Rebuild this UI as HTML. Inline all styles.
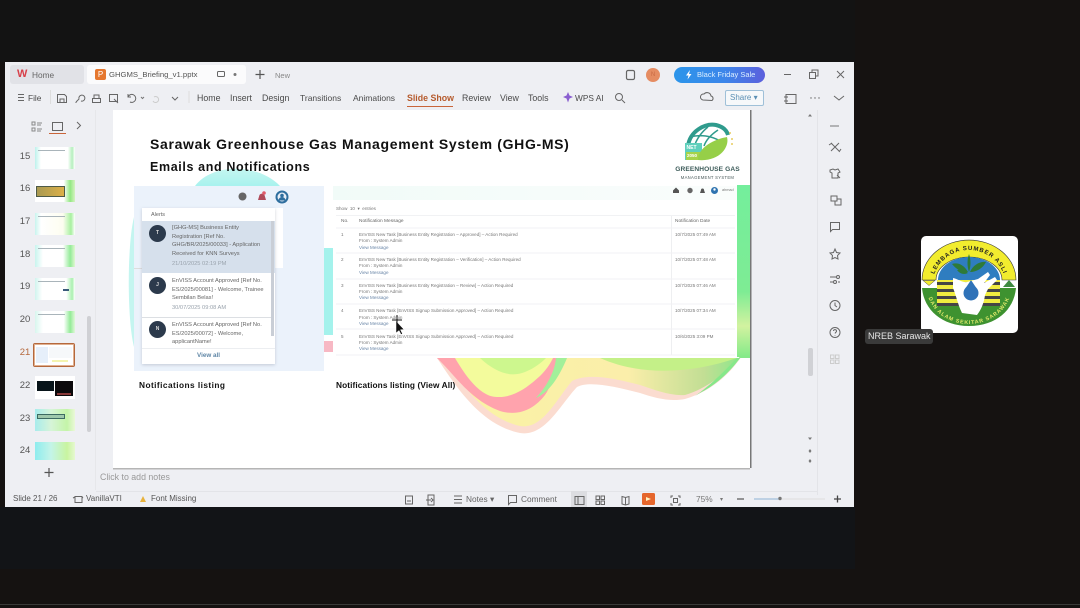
<!DOCTYPE html>
<html><head><meta charset="utf-8"><style>
html,body{margin:0;padding:0;width:1080px;height:608px;overflow:hidden;background:#151211}
body{position:relative;font-family:"Liberation Sans",sans-serif;color:#444;filter:blur(.3px)}
div,span{position:absolute;white-space:nowrap}
svg{position:absolute;overflow:visible}
.m{font-size:8.800px;top:93px;color:#4a4a4a}
.n{font-size:9.500px;color:#555;left:19px;width:12px;text-align:center}
.r{font-size:4.550px;color:#777;left:359px}
.rl{font-size:4.550px;color:#6a86a8;left:359px}
.a{font-size:5.700px;color:#666;left:172px;line-height:8.500px}
.av{width:17px;height:17px;border-radius:50%;background:#2c3a4c;color:#ddd;font-size:5px;text-align:center;line-height:17px;left:149px;font-weight:bold}
.i{fill:none;stroke:#666;stroke-width:1}
.tl{left:38px;width:27px;height:1px;background:#a9b4ba}
</style></head><body>
<div style="left:0;top:0;width:855px;height:62px;background:#131313"></div>
<div style="left:0;top:507px;width:855px;height:62px;background:#121417"></div>
<div style="left:0;top:604px;width:1080px;height:1px;background:#3a3a38"></div>

<div style="left:5px;top:62px;width:849px;height:445px;background:#eeeff3"></div>
<!-- tabs -->
<div style="left:10px;top:65px;width:74px;height:19px;background:#e1e2e7;border-radius:3px"></div>
<div style="left:87px;top:65px;width:159px;height:19px;background:#fbfbfc;border-radius:3px"></div>
<div style="left:17px;top:68px;font-size:11px;font-weight:bold;color:#d8404a">W</div>
<div style="left:32px;top:70px;font-size:8.300px;color:#666">Home</div>
<div style="left:95px;top:69px;width:11px;height:11px;background:#e5772f;border-radius:2px;color:#fff;font-size:8px;text-align:center;line-height:11px">P</div>
<div style="left:109px;top:70px;font-size:7.700px;color:#555">GHGMS_Briefing_v1.pptx</div>
<svg style="left:0;top:0" width="1080" height="608">
<rect class="i" x="217.500" y="71.500" width="7" height="5" rx="1"/>
<circle cx="235" cy="74.500" r="1.500" fill="#777"/>
<path d="M260 70v9M255.500 74.500h9" stroke="#555" stroke-width="1.200" fill="none"/>
<rect x="626.500" y="70.500" width="8" height="9" rx="1.500" fill="none" stroke="#666" stroke-width="1.200"/>
<path d="M784 74.500h7" stroke="#666" fill="none"/>
<rect class="i" x="809.500" y="72.500" width="6" height="6"/><path class="i" d="M812 72v-2h6v6h-2"/>
<path class="i" d="M837 71l7 7M844 71l-7 7"/>
<!-- toolbar icons -->
<path class="i" d="M18 94.500h6M18 97.500h6M18 100.500h6"/>
<path class="i" d="M57.500 94.500h7l2 2v6h-9zM60 102v-3h4v3"/>
<path class="i" d="M76 102l3-3a3 3 0 1 1 2 2M76 102v1"/>
<path class="i" d="M92.500 98.500h8v4h-8zM94 98v-3h5v3"/>
<path class="i" d="M109.500 94.500h8v7h-8zM114 99l4 4"/>
<path class="i" d="M128 97a4 4 0 1 1 2 5M128 94v3h3"/>
<path d="M141 97l1.500 1.500 1.500-1.500" stroke="#777" fill="none"/>
<path d="M154 97a3 3 0 1 1-1 4" stroke="#ccc" fill="none"/>
<path d="M172 97l3 3 3-3" class="i"/>
<path d="M189 91v12" stroke="#ddd"/>
<path d="M568 92l1.500 3.500 3.500 1.500-3.500 1.500-1.500 4-1.500-4-3.500-1.500 3.500-1.500z" fill="#8a5fd0"/>
<circle class="i" cx="619" cy="97" r="3.500"/><path class="i" d="M622 100l3 3"/>
<path class="i" d="M703 100a3 3 0 0 1 1-6 4 4 0 0 1 7 2 2.500 2.500 0 0 1 1 4.500z"/>
<path class="i" d="M786 94.500h10v9h-10zM784 97h4M784 101h4"/>
<circle cx="811" cy="98" r=".7" fill="#666"/><circle cx="815" cy="98" r=".7" fill="#666"/><circle cx="819" cy="98" r=".7" fill="#666"/>
<path class="i" d="M834 96l5 4 5-4"/>
<!-- left panel icons -->
<path class="i" d="M32 122h3v3h-3zM32 128h3v3h-3zM37 123h5M37 125h4M37 129h5M37 131h4" style="stroke:#888"/>
<rect x="52.500" y="122.500" width="10" height="8" fill="none" stroke="#666"/>
<path d="M49 133.500h17" stroke="#c9653a" stroke-width="1"/>
<path class="i" d="M77 122l3.500 3.500-3.500 3.500"/>
<!-- right sidebar icons -->
<path d="M830 126h9" stroke="#777"/>
<path class="i" d="M831 143l8 8M839 143l-8 8M829 145l3-2M841 149l-2 3"/>
<path class="i" d="M830 170l3-1 2 1 3-1 2 3-2 1v5h-6v-5l-2-1zM837 175l3 3"/>
<path class="i" d="M831 196h6v5h-6zM835 201v4h6v-6h-4"/>
<path class="i" d="M830.500 222.500h9v7h-7l-2 2z"/>
<path class="i" d="M835 249l1.500 3.500 3.500.5-2.500 2.500.5 3.500-3-1.500-3 1.500.5-3.500-2.500-2.500 3.500-.5z"/>
<path class="i" d="M830 277h6M830 282h3M838 282h2"/><circle class="i" cx="838" cy="277" r="1.500"/><circle class="i" cx="835" cy="282" r="1.500"/>
<circle class="i" cx="835" cy="305.500" r="5"/><path class="i" d="M835 302.500v3l2 1.500"/>
<circle class="i" cx="835" cy="332.500" r="5"/><path class="i" d="M833.500 331a1.500 1.500 0 1 1 2 1.500l-.5 1M835 335v.5"/>
<path d="M830.500 355h3.500v3.500h-3.500zM835.500 355h3.500v3.500h-3.500zM830.500 360h3.500v3.500h-3.500zM835.500 360h3.500v3.500h-3.500z" stroke="#ccc" fill="none"/>
<path d="M810 114l2 2.500h-4zM810 440l2-2.500h-4z" fill="#777"/>
<path d="M810 449l1.500 2h-3zM810 453l1.500-2h-3zM810 459l1.500 2h-3zM810 463l1.500-2h-3z" fill="#777"/>
<!-- status icons -->
<path class="i" d="M75 496.500h7v6h-7zM73 498l2-1M83 498l-1-1"/>
<path d="M140 502l3-6 3 6z" fill="#e8b23c"/>
<path class="i" d="M405.500 496h7v8h-7zM407 501h4"/>
<path class="i" d="M428 495h6v10h-6zM426 500h5M431 498l2 2-2 2"/>
<path class="i" d="M454 496h8M454 499.500h8M454 503h8"/>
<path class="i" d="M508.500 495.500h8v7h-6l-2 2z"/>
<path class="i" d="M596 496h3.500v3.500h-3.500zM601 496h3.500v3.500h-3.500zM596 501h3.500v3.500h-3.500zM601 501h3.500v3.500h-3.500z"/>
<path class="i" d="M622 496.500l3.500 1 3.500-1v7.500l-3.500 1-3.500-1zM625.500 497.500v7"/>
<path class="i" d="M671 498v-2h2M678 496h2v2M680 503v2h-2M673 505h-2v-2"/><rect class="i" x="673.500" y="498.500" width="4" height="4"/>
<path d="M737 499h7" stroke="#555" stroke-width="1.200"/>
<path d="M754 499h25" stroke="#8fb3d4"/><path d="M779 499h46" stroke="#ddd"/><circle cx="780" cy="498.500" r="1.700" fill="#777"/>
<path d="M834 499h7M837.500 495.500v7" stroke="#444" stroke-width="1.300"/>
<path d="M49 468v9M44.500 472.500h9" stroke="#555" stroke-width="1.200"/>
</svg>
<div style="left:275px;top:71px;font-size:7.500px;color:#888">New</div>
<div style="left:646px;top:68px;width:14px;height:14px;border-radius:50%;background:#e58c62;color:#c96a44;font-size:6px;text-align:center;line-height:14px">N</div>
<div style="left:674px;top:67px;width:91px;height:16px;border-radius:8px;background:linear-gradient(90deg,#2b95ea,#3c86ea 55%,#5c5fdc);color:#dcefff;font-size:7.500px;line-height:16px;text-indent:23px">Black Friday Sale</div>
<svg style="left:0;top:0" width="1080" height="608"><path d="M690 70l-4 5.500h2.500l-1 4 4-5.500h-2.500z" fill="#fff"/></svg>

<div class="m" style="left:28px;top:93px;font-size:8.300px">File</div>
<div style="left:50px;top:90px;width:1px;height:14px;background:#ddd"></div>
<div class="m" style="left:197px">Home</div>
<div class="m" style="left:230px">Insert</div>
<div class="m" style="left:262px">Design</div>
<div class="m" style="left:300px;font-size:8.500px">Transitions</div>
<div class="m" style="left:353px;font-size:8.500px">Animations</div>
<div class="m" style="left:407px;color:#b55a2c;font-weight:bold;font-size:8.800px">Slide Show</div>
<div style="left:407px;top:106px;width:46px;height:1px;background:#c9653a"></div>
<div class="m" style="left:462px">Review</div>
<div class="m" style="left:500px">View</div>
<div class="m" style="left:528px">Tools</div>
<div class="m" style="left:575px;font-size:8.300px">WPS AI</div>
<div style="left:725px;top:90px;width:37px;height:14px;border:1px solid #9fc0d8;border-radius:2px;background:#f6f8fa;color:#5a8fb4;font-size:8px;line-height:14px;text-indent:4px">Share ▾</div>

<!-- sidebar -->
<div style="left:95px;top:110px;width:1px;height:380px;background:#e6e7ea"></div>
<div style="left:817px;top:110px;width:1px;height:385px;background:#e3e4e8"></div>
<div style="left:87px;top:316px;width:4px;height:116px;background:#cfd0d4;border-radius:2px"></div>
<div style="left:808px;top:348px;width:5px;height:28px;background:#d0d1d5;border-radius:2px"></div>

<div class="n" style="top:151px">15</div><div class="n" style="top:183px">16</div><div class="n" style="top:216px">17</div><div class="n" style="top:249px">18</div><div class="n" style="top:281px">19</div><div class="n" style="top:314px">20</div><div class="n" style="top:347px;color:#b5683c">21</div><div class="n" style="top:380px">22</div><div class="n" style="top:413px">23</div><div class="n" style="top:445px">24</div>

<!-- thumbs -->
<div style="left:35px;top:147px;width:40px;height:22px;background:linear-gradient(90deg,#bdf2ec 0,#fff 15%,#fff 82%,#b5efbe 93%,#fff)"></div>
<div class="tl" style="top:150px"></div>
<div style="left:35px;top:180px;width:40px;height:22px;background:linear-gradient(90deg,#fff 72%,#94e884 88%,#d5f2c0)"></div>
<div style="left:36px;top:186px;width:29px;height:11px;background:linear-gradient(90deg,#a99a52,#dcb048);border:1px solid #4d5a48;box-sizing:border-box"></div>
<div style="left:35px;top:213px;width:40px;height:22px;background:linear-gradient(90deg,#c8f4ee 0,#fff 15%,#fdfdf0 70%,#a8f0a0 90%,#fff)"></div>
<div class="tl" style="top:216px"></div>
<div style="left:35px;top:245px;width:40px;height:22px;background:linear-gradient(90deg,#c8f4ee 0,#fff 20%,#fff 70%,#94eb98 88%,#dff8d0)"></div>
<div class="tl" style="top:248px"></div>
<div style="left:35px;top:278px;width:40px;height:22px;background:linear-gradient(90deg,#d0f4ee 0,#fff 18%,#fff 78%,#aaf0b0 93%,#fff)"></div>
<div class="tl" style="top:281px"></div>
<div style="left:63px;top:289px;width:6px;height:2px;background:#3a5a7a"></div>
<div style="left:35px;top:311px;width:40px;height:22px;background:linear-gradient(90deg,#d8f6ee 0,#fff 20%,#fff 72%,#94eb98 88%,#e0f8d8)"></div>
<div class="tl" style="top:314px"></div>
<div style="left:33px;top:343px;width:42px;height:24px;background:#fff;border:1px solid #b5683c;box-sizing:border-box;border-radius:2px;box-shadow:inset 0 0 0 1px #e0b090"></div>
<div style="left:36px;top:347px;width:12px;height:16px;background:#e6effa"></div>
<div style="left:49px;top:347px;width:23px;height:11px;background:#f6f8fa"></div>
<div style="left:52px;top:360px;width:16px;height:2px;background:#f3f4b0"></div>
<div style="left:35px;top:376px;width:40px;height:23px;background:#fff"></div>
<div style="left:37px;top:381px;width:17px;height:10px;background:#08141a"></div>
<div style="left:55px;top:381px;width:18px;height:15px;background:#0c0a0c"></div>
<div style="left:57px;top:393px;width:14px;height:2px;background:#883838"></div>
<div style="left:35px;top:409px;width:40px;height:22px;background:linear-gradient(90deg,#a8ecec,#d6f4d8 40%,#c4f4a8 80%,#eaf8d8)"></div>
<div style="left:37px;top:414px;width:28px;height:5px;background:#9fc8ac;border:1px solid #3d6a62;box-sizing:border-box"></div>
<div style="left:35px;top:442px;width:40px;height:18px;background:linear-gradient(90deg,#8eecee,#c4f4e8 40%,#c8f4a0 80%,#e6f8d0)"></div>

<!-- slide -->
<div style="left:113px;top:110px;width:637px;height:358px;background:#fff;box-shadow:1.500px 0 0 #777,0 1.500px 0 #b5b5b5"></div>
<svg style="left:0;top:0" width="1080" height="608">
<defs>
<linearGradient id="gs" x1="0" x2="0" y1="0" y2="1"><stop offset="0" stop-color="#74ee9c"/><stop offset=".62" stop-color="#7eec94"/><stop offset=".82" stop-color="#d2f2a0"/><stop offset="1" stop-color="#84ea88"/></linearGradient>
<linearGradient id="ga" x1="0" x2="0" y1="0" y2="1"><stop offset="0" stop-color="#c4f6f0"/><stop offset="1" stop-color="#a8f2ee"/></linearGradient>
<linearGradient id="gr" x1="0" x2="1" y1="0" y2="0"><stop offset="0" stop-color="#f9f3a4"/><stop offset=".6" stop-color="#fbeeaa"/><stop offset=".85" stop-color="#c2de94"/><stop offset="1" stop-color="#7eea88"/></linearGradient>
</defs>
<!-- outer cream/pink edge -->
<path d="M437 358C455 385 480 425 520 433C545 437 560 405 577 387C590 380 620 388 640 393C655 398 670 402 685 399C715 390 735 370 750 343V358z" fill="#fbdcd0"/>
<path d="M445 358C462 385 485 418 520 426C542 430 556 400 572 381C590 372 620 380 640 385C655 390 670 396 685 395C712 387 735 366 750 343V358z" fill="url(#gr)"/>
<!-- pink band -->
<path d="M437 358C455 375 470 400 500 411C520 417 535 408 545 395C552 385 556 368 557 358z" fill="#ffa3ad"/>
<!-- inner yellow -->
<path d="M455 358C465 375 480 397 497 397C515 398 530 385 540 376C548 368 551 362 553 358z" fill="#f3fb9c"/>
<path d="M480 358C495 372 510 378 525 372C535 368 542 362 546 358z" fill="#cdf78e"/>
<!-- green stripe -->
<path d="M556 358H567C560 375 550 392 536 398C548 385 555 370 556 358z" fill="#a2f09a"/>
<!-- right top -->
<path d="M600 358C640 376 690 374 737 358z" fill="#c4f088"/>
<path d="M700 393C725 380 740 360 750 343V358H737C730 365 715 382 695 396z" fill="#86e88a"/>
<path d="M195 186C212 163 258 163 280 186z" fill="url(#ga)"/>
<path d="M134 217C127 245 127 320 134 347z" fill="#c4f5f0"/>
<rect x="737" y="185" width="13" height="172" fill="url(#gs)"/>
<rect x="324" y="248" width="9.500" height="87" fill="#a4f2ec"/>
<rect x="324" y="341" width="9.500" height="11" fill="#f7b8c4"/>
</svg>
<div style="left:150px;top:136px;font-size:14px;font-weight:bold;color:#111;letter-spacing:.67px">Sarawak Greenhouse Gas Management System (GHG-MS)</div>
<div style="left:150px;top:160px;font-size:12.500px;font-weight:bold;color:#111;letter-spacing:.63px">Emails and Notifications</div>

<!-- logo -->
<svg style="left:0;top:0" width="1080" height="608">
<path d="M688 146C690 131 705 123 716 125C724 127 727 131 728 135" fill="none" stroke="#2f9b8d" stroke-width="4"/>
<path d="M694 148C696 138 704 130 708 127M704 146C706 140 712 134 718 130M690 137C700 134 712 136 720 141" fill="none" stroke="#2f9b8d" stroke-width="1.500"/>
<rect x="685" y="143" width="17" height="17" fill="#5fd0bc"/>
<rect x="686" y="152" width="15" height="8" fill="#a6d34a"/>
<path d="M698 160C698 147 715 139 727 137C730 148 718 162 698 160z" fill="#96cf48"/>
<circle cx="730" cy="133" r="1" fill="#e8cc60"/><circle cx="732" cy="139" r="1" fill="#e8cc60"/><circle cx="732" cy="144" r="1" fill="#e8cc60"/>
</svg>
<div style="left:686.500px;top:145px;font-size:5px;color:#fff;font-weight:bold">NET</div>
<div style="left:687px;top:153px;font-size:4.500px;color:#fff;font-weight:bold">2050</div>
<div style="left:663px;top:166px;width:90px;text-align:center;font-size:6.600px;font-weight:bold;color:#3b5a58;letter-spacing:.1px;margin-left:-.5px">GREENHOUSE GAS</div>
<div style="left:663px;top:174.500px;width:90px;text-align:center;font-size:4.200px;color:#4a5a5a;letter-spacing:.3px;margin-left:-.5px">MANAGEMENT SYSTEM</div>

<!-- left shot -->
<div style="left:134px;top:186px;width:190px;height:185px;background:#ebf2fb"></div>
<div style="left:275px;top:208px;width:8px;height:60px;background:#fff"></div>
<div style="left:134px;top:268px;width:8px;height:1px;background:#ddd"></div>
<svg style="left:0;top:0" width="1080" height="608">
<circle cx="242.500" cy="196.500" r="4" fill="#666"/>
<path d="M258 200l1.500-5a3 3 0 0 1 5 0l1.500 5z" fill="#b04a5a"/><circle cx="264" cy="193" r="1.800" fill="#e05a6a"/>
<circle cx="282" cy="197" r="6.500" fill="#2e6e9e"/><circle cx="282" cy="197" r="4.500" fill="#e8eef6"/><circle cx="282" cy="195.500" r="1.800" fill="#2e6e9e"/><path d="M278.500 200.500a3.500 3.500 0 0 1 7 0z" fill="#2e6e9e"/>
</svg>
<div style="left:142px;top:208px;width:133px;height:156px;background:#fff;box-shadow:0 1px 3px rgba(120,130,150,.35)"></div>
<div style="left:151px;top:211.500px;font-size:5.500px;color:#666">Alerts</div>
<div style="left:142px;top:221px;width:133px;height:52px;background:#d6e0ec"></div>
<div style="left:271px;top:221px;width:3px;height:115px;background:#c9ced6"></div>
<div class="av" style="top:225px">T</div>
<div class="a" style="top:224px;white-space:pre">[GHG-MS] Business Entity
Registration [Ref No.
GHG/BR/2025/00033] - Application
Received for KNN Surveys</div>
<div class="a" style="top:260px;color:#9aa3ad">21/10/2025 02:19 PM</div>
<div class="av" style="top:277px">J</div>
<div class="a" style="top:277px;white-space:pre">EnVISS Account Approved [Ref No.
ES/2025/00081] - Welcome, Trainee
Sembilan Belas!</div>
<div class="a" style="top:304px;color:#9aa3ad">30/07/2025 09:08 AM</div>
<div style="left:142px;top:317px;width:129px;height:1px;background:#dcdfe3"></div>
<div class="av" style="top:321px">N</div>
<div class="a" style="top:321px;white-space:pre">EnVISS Account Approved [Ref No.
ES/2025/00072] - Welcome,
applicantName!</div>
<div style="left:142px;top:348px;width:133px;height:1px;background:#eceef1"></div>
<div style="left:142px;top:352px;width:133px;text-align:center;font-size:6.300px;font-weight:bold;color:#5f86a6">View all</div>
<div style="left:139px;top:380px;font-size:8.300px;font-weight:bold;color:#111;letter-spacing:.45px">Notifications listing</div>

<!-- right shot -->
<div style="left:333px;top:186px;width:404px;height:171px;background:#fff"></div>
<div style="left:333px;top:186px;width:404px;height:14px;background:linear-gradient(90deg,#f1fbf8,#fafdfc)"></div>
<svg style="left:0;top:0" width="1080" height="608">
<path d="M673 190.500l3-3 3 3v2.500h-6z" fill="#555"/>
<circle cx="690" cy="190.500" r="2.700" fill="#666"/>
<path d="M700 193l1-3a1.500 1.500 0 0 1 3 0l1 3z" fill="#555"/>
<circle cx="714.500" cy="190.500" r="3.500" fill="#2f73b0"/><circle cx="714.500" cy="189.500" r="1.200" fill="#fff"/>
<path d="M671.500 215V355" stroke="#eeeff1"/>
<path d="M336 215.500H735M336 228H735M336 253H735M336 279H735M336 304H735M336 329H735M336 355H735" stroke="#f1f2f4"/>
</svg>
<div style="left:722px;top:188px;font-size:3.800px;color:#777">ahmad</div>
<div class="r" style="left:336px;top:206px">Show &nbsp;10 &nbsp;▾ &nbsp;entries</div>
<div class="r" style="left:341px;top:219px;font-size:4.800px;color:#666">No.</div>
<div class="r" style="top:219px;font-size:4.800px;color:#666">Notification Message</div>
<div class="r" style="left:675px;top:219px;font-size:4.800px;color:#666">Notification Date</div>
<div class="r" style="left:341px;top:231.500px">1</div>
<div class="r" style="top:231.500px">EnVISS New Task [Business Entity Registration – Approved] – Action Required</div>
<div class="r" style="top:237.500px">From : System Admin</div><div class="rl" style="top:244.500px">View Message</div>
<div class="r" style="left:675px;top:231.500px">10/7/2025 07:49 AM</div>
<div class="r" style="left:341px;top:257px">2</div>
<div class="r" style="top:257px">EnVISS New Task [Business Entity Registration – Verification] – Action Required</div>
<div class="r" style="top:263px">From : System Admin</div><div class="rl" style="top:269.500px">View Message</div>
<div class="r" style="left:675px;top:257px">10/7/2025 07:48 AM</div>
<div class="r" style="left:341px;top:282.500px">3</div>
<div class="r" style="top:282.500px">EnVISS New Task [Business Entity Registration – Review] – Action Required</div>
<div class="r" style="top:288.500px">From : System Admin</div><div class="rl" style="top:295px">View Message</div>
<div class="r" style="left:675px;top:282.500px">10/7/2025 07:46 AM</div>
<div class="r" style="left:341px;top:308px">4</div>
<div class="r" style="top:308px">EnVISS New Task [EnVISS Signup Submission Approved] – Action Required</div>
<div class="r" style="top:314.500px">From : System Admin</div><div class="rl" style="top:320.500px">View Message</div>
<div class="r" style="left:675px;top:308px">10/7/2025 07:34 AM</div>
<div class="r" style="left:341px;top:333.500px">5</div>
<div class="r" style="top:333.500px">EnVISS New Task [EnVISS Signup Submission Approved] – Action Required</div>
<div class="r" style="top:339.500px">From : System Admin</div><div class="rl" style="top:346px">View Message</div>
<div class="r" style="left:675px;top:333.500px">10/6/2025 3:09 PM</div>
<div style="left:336px;top:380px;font-size:8.300px;font-weight:bold;color:#111;letter-spacing:.1px">Notifications listing (View All)</div>
<svg style="left:0;top:0" width="1080" height="608">
<path d="M396 321v12l3-2.500 2 4 1.500-.7-2-4 3.500-.3z" fill="#111" stroke="#fff" stroke-width=".5"/>
<path d="M392 320h10M397 315v10" stroke="#111" stroke-width="1"/>
</svg>

<div style="left:100px;top:472px;font-size:8.800px;color:#999">Click to add notes</div>
<div style="left:96px;top:491px;width:721px;height:1px;background:#e3e4e8"></div>
<!-- status -->
<div style="left:13px;top:494px;font-size:8px;color:#555">Slide 21 / 26</div>
<div style="left:86px;top:494px;font-size:8px;color:#555">VanillaVTI</div>
<div style="left:151px;top:494px;font-size:8px;color:#555">Font Missing</div>
<div style="left:466px;top:494px;font-size:8.300px;color:#666">Notes ▾</div>
<div style="left:521px;top:494px;font-size:8.300px;color:#666">Comment</div>
<div style="left:571px;top:491px;width:16px;height:16px;background:#dcdde1"></div>
<svg style="left:0;top:0" width="1080" height="608"><path class="i" d="M575 496.500h9v8h-9zM578 497v7"/></svg>
<div style="left:642px;top:493px;width:13px;height:12px;background:#e5662c;border-radius:1.500px"></div>
<div style="left:646px;top:496.500px;width:0;height:0;border-left:5px solid #fff3c0;border-top:2.500px solid transparent;border-bottom:2.500px solid transparent"></div>
<div style="left:696px;top:494px;font-size:8.300px;color:#777">75%</div>
<div style="left:720px;top:496px;font-size:6px;color:#777">▾</div>

<!-- participant -->
<div style="left:921px;top:236px;width:97px;height:97px;background:#fff;border-radius:5px"></div>
<svg style="left:0;top:0" width="1080" height="608">
<defs>
<path id="ta" d="M932 287A37 37 0 0 1 1006 287"/>
<path id="tb" d="M927 288A42 36 0 0 0 1011 288"/>
</defs>
<!-- top yellow band and blue -->
<path d="M922 280A47 40 0 0 1 1016 280H1002A33 23 0 0 0 936 280z" fill="#f2ec2e" stroke="#333" stroke-width=".6"/>
<path d="M938 280A31 23 0 0 1 1000 280z" fill="#2f7dc0"/>
<!-- triangles -->
<path d="M923 280.500H935L929 285.500z" fill="#f2ec2e" stroke="#444" stroke-width=".5"/>
<path d="M1003 287L1009 280L1015 287z" fill="#3e8a40"/>
<!-- bottom green -->
<path d="M922 288H1016C1014 310 996 326 969 326S924 310 922 288z" fill="#3e9230"/>
<!-- stripes -->
<rect x="937" y="280" width="63" height="26" fill="#f0ec40"/>
<path d="M937 283.500h63M937 290.500h63M937 297.500h63M937 304.500h63" stroke="#454545" stroke-width="3"/>
<path d="M944 306H994C990 314 980 316 969 316S948 314 944 306z" fill="#3e9230"/>
<!-- leaves -->
<path d="M969 254C967 260 967 266 969 272C971 266 971 260 969 254zM952 264C958 262 964 265 968 272C961 272 956 269 952 264zM986 262C980 261 973 265 970 272C977 272 983 268 986 262zM957 270C961 269 965 270 968 273C964 275 960 274 957 270z" fill="#2e7a38"/>
<!-- hand -->
<path d="M953 278C958 279 963 283 967 282L978 279L988 272L990 275L984 283L995 277L997 280L988 289L985 295C984 303 981 310 977 315L962 313C958 305 956 295 953 288z" fill="#fff"/>
<circle cx="971" cy="293" r="7.500" fill="#2f72b8"/><path d="M971 280L977 289H965z" fill="#2f72b8"/>
<text font-family="Liberation Sans,sans-serif" font-size="6" font-weight="bold" fill="#222" letter-spacing=".9" text-anchor="middle"><textPath href="#ta" startOffset="50%">LEMBAGA SUMBER ASLI</textPath></text>
<text font-family="Liberation Sans,sans-serif" font-size="5.300" font-weight="bold" fill="#dfe86a" letter-spacing=".9" text-anchor="middle"><textPath href="#tb" startOffset="50%">DAN ALAM SEKITAR SARAWAK</textPath></text>
</svg>
<div style="left:865px;top:329px;width:68px;height:15px;background:#3a3a3a;border-radius:3px;color:#e6e6e6;font-size:9px;line-height:15px;text-indent:3px">NREB Sarawak</div>
</body></html>
